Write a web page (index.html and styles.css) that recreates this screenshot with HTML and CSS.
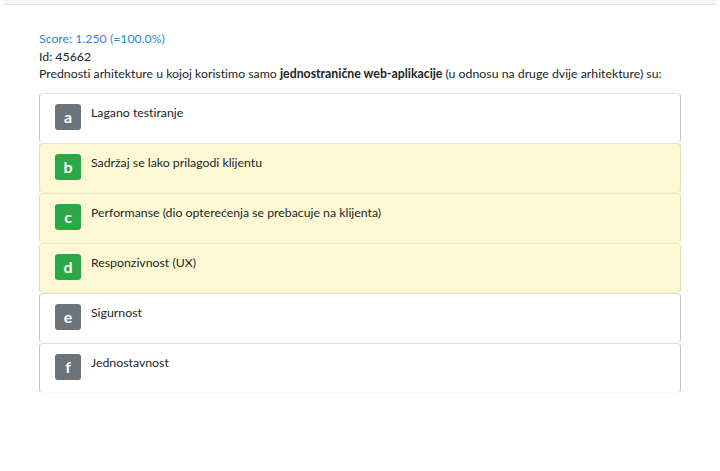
FILE: index.html
```html
<!DOCTYPE html>
<html>
<head>
<meta charset="utf-8">
<link rel="stylesheet" href="styles.css">
</head>
<body>
<div class="topbar"></div>
<main class="question">
  <div class="score">Score: 1.250 (=100.0%)</div>
  <div class="qid">Id: 45662</div>
  <div class="qtext">Prednosti arhitekture u kojoj koristimo samo <b>jednostranične web-aplikacije</b> (u odnosu na druge dvije arhitekture) su:</div>
  <div class="options">
    <div class="option"><span class="badge">a</span><span class="label">Lagano testiranje</span></div>
    <div class="option correct"><span class="badge">b</span><span class="label">Sadržaj se lako prilagodi klijentu</span></div>
    <div class="option correct"><span class="badge">c</span><span class="label">Performanse (dio opterećenja se prebacuje na klijenta)</span></div>
    <div class="option correct"><span class="badge">d</span><span class="label">Responzivnost (UX)</span></div>
    <div class="option"><span class="badge">e</span><span class="label">Sigurnost</span></div>
    <div class="option"><span class="badge">f</span><span class="label">Jednostavnost</span></div>
  </div>
</main>
</body>
</html>
```
FILE: styles.css
```css
html, body {
  margin: 0;
  padding: 0;
  background: #fff;
}
body {
  font-family: "Lato", "Open Sans", sans-serif;
  font-size: 12.3px;
  font-variant-ligatures: none;
  color: #212529;
}
.topbar {
  margin: 0 3px;
  height: 4px;
  background: #f4f6f8;
  border-bottom: 1px solid #e1e3e6;
}
.question {
  padding: 25px 39px 0 39px;
  width: 642px;
}
.score {
  color: #1f8ad6;
  line-height: 17.5px;
}
.qid, .qtext {
  line-height: 17.5px;
}
.qtext b {
  font-weight: 700;
}
.options {
  margin-top: 10px;
  display: flex;
  flex-direction: column;
}
.option {
  height: 48px;
  display: flex;
  align-items: flex-start;
  gap: 10px;
  padding: 0 15px;
  border: 1px solid #c8c8c8;
  border-top-color: #e2e2e2;
  border-bottom-color: #f8f8f8;
  border-radius: 4px;
  background: #fff;
}
.option.correct {
  background: #fef9d4;
  border-color: #e3dcb2;
  border-top-color: #eee7c4;
  border-bottom-color: #f6f0d2;
}
.badge {
  margin-top: 10px;
  width: 26px;
  height: 26px;
  border-radius: 3px;
  background: #6b737b;
  color: #fff;
  font-weight: 700;
  font-size: 16px;
  display: flex;
  align-items: center;
  justify-content: center;
}
.correct .badge {
  background: #2aa845;
}
.label {
  margin-top: 10px;
  line-height: 17px;
}
```
